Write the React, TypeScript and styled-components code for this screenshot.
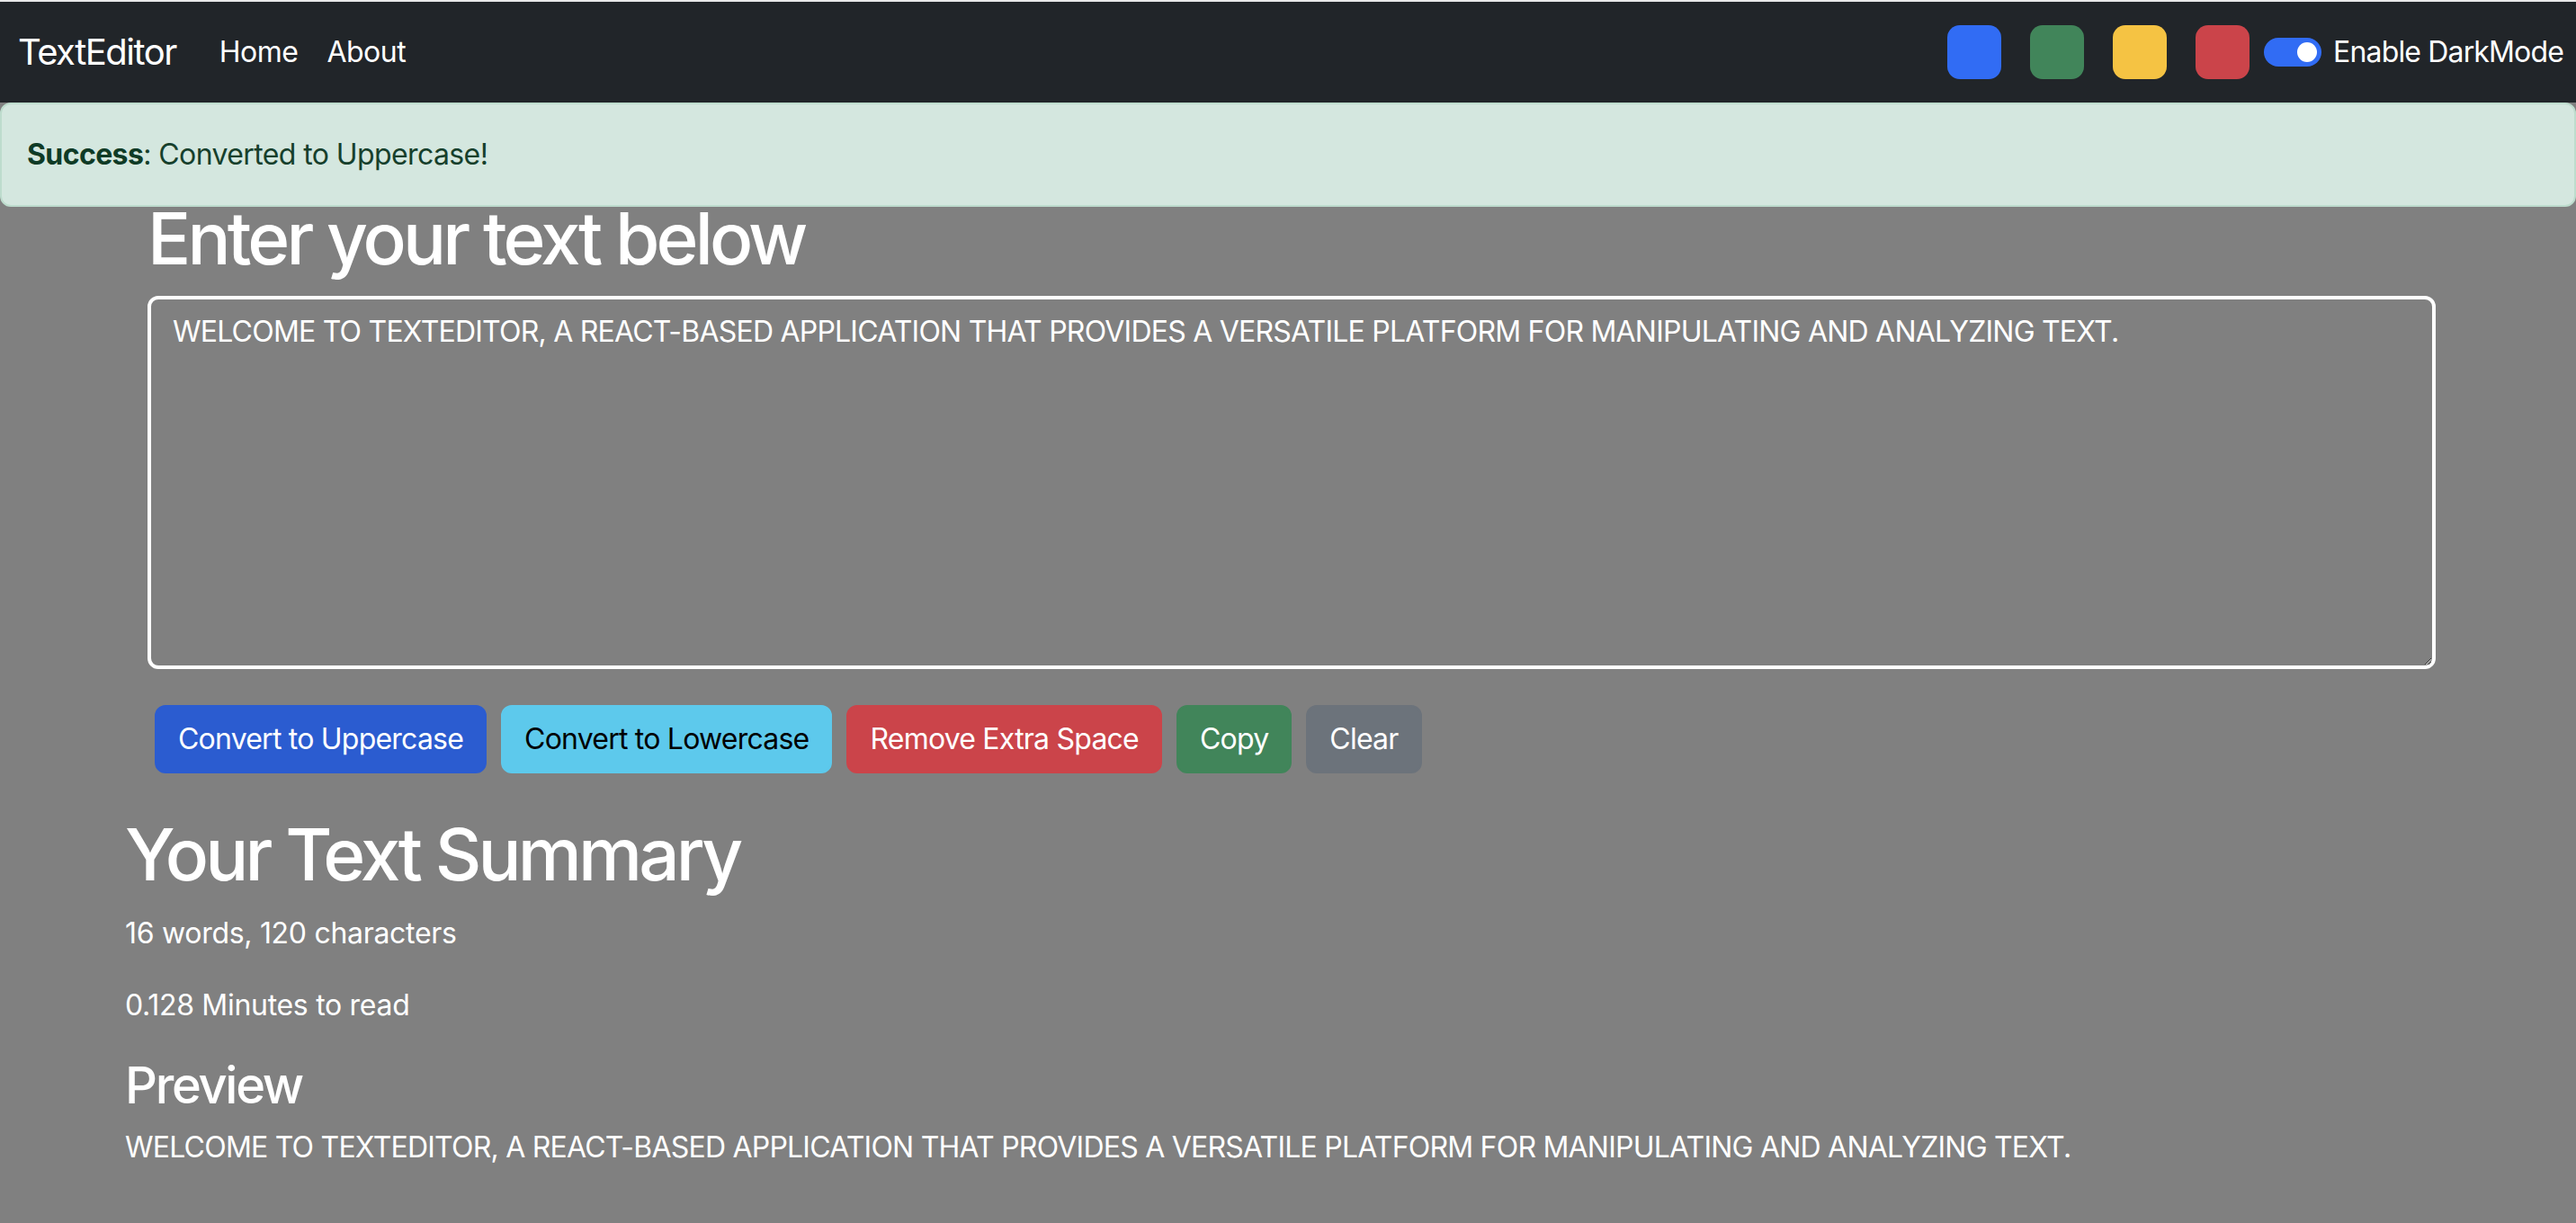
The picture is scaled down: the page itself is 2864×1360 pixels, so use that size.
import React, { useState } from 'react';
import styled, { createGlobalStyle } from 'styled-components';

const GlobalStyle = createGlobalStyle`
  *, *::before, *::after { box-sizing: border-box; }
  html, body {
    margin: 0;
    padding: 0;
    background: #808080;
  }
  body {
    font-family: Inter, "Noto Sans", "Liberation Sans", sans-serif;
    color: #ffffff;
    -webkit-font-smoothing: antialiased;
  }
`;

const Page = styled.div`
  min-height: 100vh;
  border-top: 2px solid #e8e8e8;
`;

const NavBar = styled.nav`
  height: 112px;
  background: #212529;
  display: flex;
  align-items: center;
  padding: 0 14px 0 20px;
`;

const Brand = styled.a`
  font-size: 40px;
  line-height: 60px;
  letter-spacing: -1.5px;
  color: #ffffff;
  text-decoration: none;
  margin-right: 32px;
`;

const NavLinks = styled.ul`
  display: flex;
  list-style: none;
  margin: 0;
  padding: 0;
`;

const NavLink = styled.a`
  display: block;
  padding: 16px;
  font-size: 32px;
  line-height: 48px;
  letter-spacing: -0.5px;
  color: #ffffff;
  text-decoration: none;
`;

const RightGroup = styled.div`
  margin-left: auto;
  display: flex;
  align-items: center;
`;

const Swatches = styled.div`
  display: flex;
  gap: 32px;
`;

const Swatch = styled.button<{ $color: string }>`
  width: 60px;
  height: 60px;
  border: none;
  border-radius: 14px;
  background: ${(p) => p.$color};
  padding: 0;
  cursor: pointer;
`;

const Switch = styled.span`
  margin-left: 16px;
  width: 64px;
  height: 32px;
  border-radius: 16px;
  background: #316cf4;
  display: flex;
  align-items: center;
  justify-content: flex-end;
  padding: 0 5px;
`;

const Knob = styled.span`
  width: 22px;
  height: 22px;
  border-radius: 50%;
  background: #ffffff;
`;

const SwitchLabel = styled.label`
  margin-left: 13px;
  font-size: 32px;
  line-height: 48px;
  letter-spacing: -0.85px;
  color: #ffffff;
`;

const AlertSlot = styled.div`
  height: 100px;
`;

const Alert = styled.div`
  background: #d4e7df;
  border: 2px solid #bddccd;
  border-radius: 12px;
  padding: 32px 28px;
  color: #16402c;
  font-size: 32px;
  line-height: 48px;
  letter-spacing: -0.6px;
  strong {
    font-weight: 700;
    color: #0f3b26;
  }
`;

const FormSection = styled.section`
  padding: 3px 156px 0 164px;
`;

const BigHeading = styled.h1`
  margin: 0 0 16px;
  font-size: 80px;
  font-weight: 500;
  line-height: 96px;
  letter-spacing: -3.85px;
  color: #ffffff;
`;

const TextBox = styled.textarea`
  display: block;
  width: 100%;
  height: 415px;
  margin: 0 0 32px;
  padding: 12px 24px;
  border: 4px solid #ffffff;
  border-radius: 12px;
  background: #808080;
  color: #ffffff;
  font-family: inherit;
  font-size: 32px;
  line-height: 48px;
  letter-spacing: -0.78px;
  outline: none;
`;

const ButtonRow = styled.div`
  display: flex;
  gap: 16px;
  padding: 8px;
`;

const variants: Record<string, { bg: string; fg: string }> = {
  primary: { bg: '#2b5cd0', fg: '#ffffff' },
  info: { bg: '#5dc9ec', fg: '#000000' },
  danger: { bg: '#cb444a', fg: '#ffffff' },
  success: { bg: '#41855a', fg: '#ffffff' },
  secondary: { bg: '#6c737b', fg: '#ffffff' },
};

const ActionButton = styled.button<{ $variant: string }>`
  font-family: inherit;
  font-size: 32px;
  line-height: 48px;
  letter-spacing: -0.78px;
  padding: 12px 24px;
  border: 2px solid ${(p) => variants[p.$variant].bg};
  border-radius: 12px;
  background: ${(p) => variants[p.$variant].bg};
  color: ${(p) => variants[p.$variant].fg};
  cursor: pointer;
`;

const SummarySection = styled.section`
  padding: 34px 136px 40px 139px;
`;

const Para = styled.p<{ $upper?: boolean }>`
  margin: 0 0 32px;
  font-size: 32px;
  line-height: 48px;
  letter-spacing: ${(p) => (p.$upper ? '-0.78px' : '-0.3px')};
  color: #ffffff;
`;

const SubHeading = styled.h2`
  margin: 0 0 11px;
  font-size: 56px;
  font-weight: 500;
  line-height: 1.2;
  letter-spacing: -2.3px;
  color: #ffffff;
`;

const INITIAL =
  'WELCOME TO TEXTEDITOR, A REACT-BASED APPLICATION THAT PROVIDES A VERSATILE PLATFORM FOR MANIPULATING AND ANALYZING TEXT.';

export default function App() {
  const [text, setText] = useState(INITIAL);
  const words = text.split(/\s+/).filter((w) => w.length > 0).length;

  return (
    <>
      <GlobalStyle />
      <Page>
        <NavBar>
          <Brand href="#">TextEditor</Brand>
          <NavLinks>
            <li>
              <NavLink href="#">Home</NavLink>
            </li>
            <li>
              <NavLink href="#">About</NavLink>
            </li>
          </NavLinks>
          <RightGroup>
            <Swatches>
              <Swatch $color="#316cf4" aria-label="blue" />
              <Swatch $color="#41855a" aria-label="green" />
              <Swatch $color="#f5c343" aria-label="yellow" />
              <Swatch $color="#cb444a" aria-label="red" />
            </Swatches>
            <Switch>
              <Knob />
            </Switch>
            <SwitchLabel>Enable DarkMode</SwitchLabel>
          </RightGroup>
        </NavBar>
        <AlertSlot>
          <Alert>
            <strong>Success</strong>: Converted to Uppercase!
          </Alert>
        </AlertSlot>
        <FormSection>
          <BigHeading>Enter your text below</BigHeading>
          <TextBox value={text} onChange={(e) => setText(e.target.value)} />
          <ButtonRow>
            <ActionButton $variant="primary">Convert to Uppercase</ActionButton>
            <ActionButton $variant="info">Convert to Lowercase</ActionButton>
            <ActionButton $variant="danger">Remove Extra Space</ActionButton>
            <ActionButton $variant="success">Copy</ActionButton>
            <ActionButton $variant="secondary">Clear</ActionButton>
          </ButtonRow>
        </FormSection>
        <SummarySection>
          <BigHeading>Your Text Summary</BigHeading>
          <Para>
            {words} words, {text.length} characters
          </Para>
          <Para>{(0.008 * words).toFixed(3)} Minutes to read</Para>
          <SubHeading>Preview</SubHeading>
          <Para $upper>{text}</Para>
        </SummarySection>
      </Page>
    </>
  );
}
